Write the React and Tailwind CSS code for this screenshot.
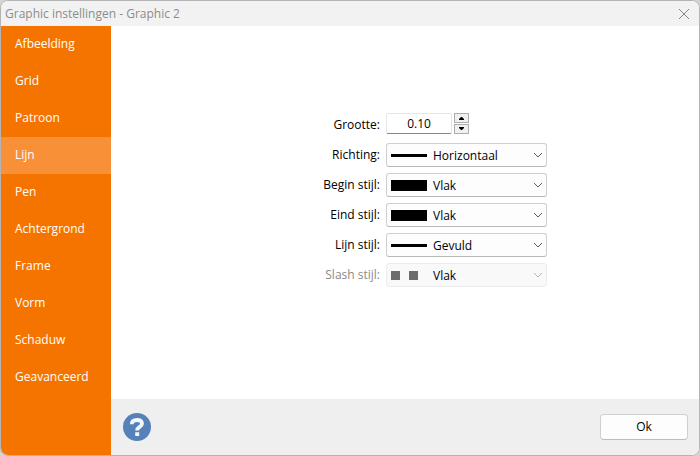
import { useState } from 'react';

const tabs = [
  'Afbeelding',
  'Grid',
  'Patroon',
  'Lijn',
  'Pen',
  'Achtergrond',
  'Frame',
  'Vorm',
  'Schaduw',
  'Geavanceerd',
];

function Swatch({ type }) {
  if (type === 'dash') {
    return (
      <span className="flex w-9 gap-[9px]">
        <span className="size-[9px] bg-[#6d6d6d]"></span>
        <span className="size-[9px] bg-[#6d6d6d]"></span>
      </span>
    );
  }
  return <span className={type === 'line' ? 'block h-[3px] w-9 bg-black' : 'block h-[11px] w-9 bg-black'}></span>;
}

function SelectRow({ id, label, options, swatch, disabled = false }) {
  return (
    <>
      <label htmlFor={id} className={disabled ? 'pb-px text-right text-[#8a8a8a]' : 'pb-px text-right'}>
        {label}
      </label>
      <div className="relative">
        <select
          id={id}
          disabled={disabled}
          className="block h-6 w-full appearance-none rounded-[3px] border border-[#cfcfcf] border-b-[#b8b8b8] bg-[#fdfdfd] pt-0.5 pl-[46px] pr-6 text-black opacity-100 disabled:border-[#ececec] disabled:bg-[#f9f9f9]"
        >
          {options.map((option) => (
            <option key={option}>{option}</option>
          ))}
        </select>
        <span className="pointer-events-none absolute inset-y-0 left-[5px] flex items-center">
          <Swatch type={swatch} />
        </span>
        <span className="pointer-events-none absolute inset-y-0 right-1 flex items-center">
          <svg width="10" height="6" viewBox="0 0 10 6" fill="none" stroke={disabled ? '#b4b4b4' : '#5c5c5c'}>
            <path d="M1 1l4 4 4-4" />
          </svg>
        </span>
      </div>
    </>
  );
}

function App() {
  const [active, setActive] = useState('Lijn');
  const [size, setSize] = useState('0.10');

  const step = (delta) => {
    const next = Math.max(0, (parseFloat(size) || 0) + delta);
    setSize(next.toFixed(2));
  };

  return (
    <div className="min-h-screen flex bg-[#d4d4d4] font-['Open_Sans',sans-serif] text-xs text-black">
      <div className="flex flex-1 flex-col overflow-hidden rounded-lg border border-[#b4b4b4] bg-white">
        {/* Title bar */}
        <header className="flex h-[25px] items-center justify-between bg-[#f2f2f2] pl-1 pr-2.5 text-[#8c8c8c]">
          <h1>Graphic instellingen - Graphic 2</h1>
          <button type="button" aria-label="Sluiten">
            <svg width="10" height="10" viewBox="0 0 10 10" stroke="#858585">
              <path d="M0 0l10 10M10 0L0 10" />
            </svg>
          </button>
        </header>

        <div className="flex flex-1">
          {/* Tabs */}
          <nav className="flex w-[110px] shrink-0 flex-col bg-[#f57400] text-white">
            {tabs.map((tab) => (
              <button
                key={tab}
                type="button"
                onClick={() => setActive(tab)}
                className={tab === active ? 'h-[37px] bg-[#f79036] pb-px pl-3.5 text-left' : 'h-[37px] pb-px pl-3.5 text-left'}
              >
                {tab}
              </button>
            ))}
          </nav>

          <div className="flex flex-1 flex-col">
            {/* Line settings */}
            <main className="flex flex-1 justify-center pt-[87px]">
              <form className="grid grid-cols-[117px_161px] content-start items-center gap-x-1.5 gap-y-1.5">
                <label htmlFor="size" className="pb-px text-right">Grootte:</label>
                <div className="flex h-6 gap-0.5">
                  <input
                    id="size"
                    type="text"
                    value={size}
                    onChange={(e) => setSize(e.target.value)}
                    className="h-[21px] w-[66px] rounded-[2px] border border-[#e6e6e6] border-b-[#868686] bg-white text-center"
                  />
                  <div className="flex flex-col gap-px">
                    <button
                      type="button"
                      aria-label="Omhoog"
                      onClick={() => step(0.01)}
                      className="flex h-2.5 w-[15px] items-center justify-center border border-[#adadad] bg-[#f0f0f0]"
                    >
                      <svg width="7" height="4" viewBox="0 0 7 4"><path d="M1 4h5V3L4 1H3L1 3z" /></svg>
                    </button>
                    <button
                      type="button"
                      aria-label="Omlaag"
                      onClick={() => step(-0.01)}
                      className="flex h-2.5 w-[15px] items-center justify-center border border-[#adadad] bg-[#f0f0f0]"
                    >
                      <svg width="7" height="4" viewBox="0 0 7 4"><path d="M1 0h5v1L4 3H3L1 1z" /></svg>
                    </button>
                  </div>
                </div>
                <SelectRow id="direction" label="Richting:" swatch="line" options={['Horizontaal']} />
                <SelectRow id="start" label="Begin stijl:" swatch="block" options={['Vlak']} />
                <SelectRow id="end" label="Eind stijl:" swatch="block" options={['Vlak']} />
                <SelectRow id="line" label="Lijn stijl:" swatch="line" options={['Gevuld']} />
                <SelectRow id="slash" label="Slash stijl:" swatch="dash" options={['Vlak']} disabled />
              </form>
            </main>

            <footer className="flex h-14 items-center justify-between bg-[#efefef] pl-3 pr-[11px]">
              <button type="button" aria-label="Help">
                <svg width="28" height="28" viewBox="0 0 28 28" fill="none">
                  <circle cx="14" cy="14" r="14" fill="#5681b9" />
                  <path d="M8.800 11.200C8.800 8.300 11 7 14 7s5 1.300 5 3.700c0 3.300-4.900 3.200-4.900 6.800" stroke="#f4f7fb" strokeWidth="3.800" />
                  <path d="M12.200 19.300h4v3.700h-4z" fill="#f4f7fb" />
                </svg>
              </button>
              <button type="button" className="h-[26px] w-[88px] rounded border border-[#d0d0d0] border-b-[#bbbbbb] bg-[#fdfdfd]">
                Ok
              </button>
            </footer>
          </div>
        </div>
      </div>
    </div>
  );
}

export default App;
